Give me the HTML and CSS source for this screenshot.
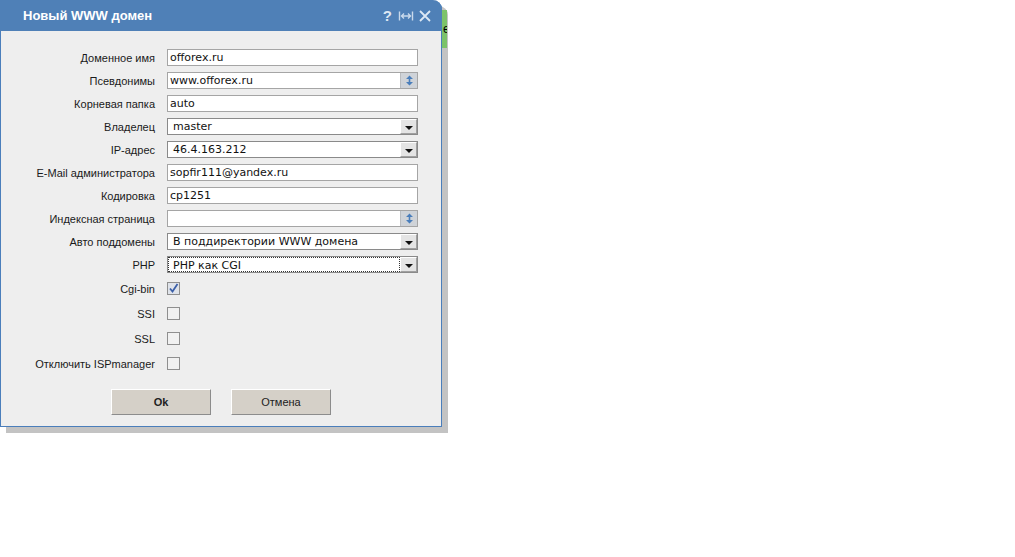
FILE: index.html
```html
<!DOCTYPE html>
<html lang="ru">
<head>
  <meta charset="UTF-8">
  <title>Новый WWW домен</title>
  <link rel="stylesheet" href="styles.css">
</head>
<body>
  <div class="desk">
    <div class="dialog">
      <div class="titlebar">
        <span class="title">Новый WWW домен</span>
        <div class="tools">
          <span class="tool">?</span>
          <svg class="tool-icon" width="16" height="12" viewBox="0 0 16 12">
            <path d="M1.5 1.5v9M14.5 1.5v9M3.5 6h9M6 3.5L3.5 6 6 8.5M10 3.5l2.5 2.5L10 8.5" fill="none" stroke="#c9d9ec" stroke-width="1.4"/>
          </svg>
          <svg class="tool-icon" width="12" height="12" viewBox="0 0 12 12">
            <path d="M1 1l10 10M11 1L1 11" fill="none" stroke="#dde8f4" stroke-width="1.8"/>
          </svg>
        </div>
      </div>

      <form class="body">
        <div class="row">
          <label>Доменное имя</label>
          <div class="field">offorex.ru</div>
        </div>
        <div class="row">
          <label>Псевдонимы</label>
          <div class="field">www.offorex.ru
            <span class="spin">
              <svg width="9" height="11" viewBox="0 0 9 11"><path d="M4.5 0.5L8 4H1zM4.5 10.5L1 7h7z" fill="#4a7ebb"/><rect x="3.7" y="3" width="1.6" height="5" fill="#4a7ebb"/></svg>
            </span>
          </div>
        </div>
        <div class="row">
          <label>Корневая папка</label>
          <div class="field">auto</div>
        </div>
        <div class="row">
          <label>Владелец</label>
          <div class="field select">master<span class="arrow"><i></i></span></div>
        </div>
        <div class="row">
          <label>IP-адрес</label>
          <div class="field select">46.4.163.212<span class="arrow"><i></i></span></div>
        </div>
        <div class="row">
          <label>E-Mail администратора</label>
          <div class="field">sopfir111@yandex.ru</div>
        </div>
        <div class="row">
          <label>Кодировка</label>
          <div class="field">cp1251</div>
        </div>
        <div class="row">
          <label>Индексная страница</label>
          <div class="field">
            <span class="spin">
              <svg width="9" height="11" viewBox="0 0 9 11"><path d="M4.5 0.5L8 4H1zM4.5 10.5L1 7h7z" fill="#4a7ebb"/><rect x="3.7" y="3" width="1.6" height="5" fill="#4a7ebb"/></svg>
            </span>
          </div>
        </div>
        <div class="row">
          <label>Авто поддомены</label>
          <div class="field select">В поддиректории WWW домена<span class="arrow"><i></i></span></div>
        </div>
        <div class="row">
          <label>PHP</label>
          <div class="field select focused"><span class="focus-ring">PHP как CGI</span><span class="arrow"><i></i></span></div>
        </div>

        <div class="row check-row">
          <label>Cgi-bin</label>
          <span class="check checked">
            <svg width="11" height="11" viewBox="0 0 11 11"><path d="M2 5.5l2.5 3L9.5 1" fill="none" stroke="#3b5fa8" stroke-width="1.8"/></svg>
          </span>
        </div>
        <div class="row check-row">
          <label>SSI</label>
          <span class="check"></span>
        </div>
        <div class="row check-row">
          <label>SSL</label>
          <span class="check"></span>
        </div>
        <div class="row check-row">
          <label>Отключить ISPmanager</label>
          <span class="check"></span>
        </div>

        <div class="buttons">
          <button type="button" class="btn ok">Ok</button>
          <button type="button" class="btn">Отмена</button>
        </div>
      </form>
    </div>

    <!-- edge of the window lying behind the dialog -->
    <div class="behind"><span>e</span></div>
  </div>
</body>
</html>
```

FILE: styles.css
```css
/* Reset and base */
* {
  box-sizing: border-box;
  margin: 0;
  padding: 0;
}

body {
  background: #ffffff;
  font-family: 'Liberation Sans', Arial, sans-serif;
  font-size: 11px;
  color: #1a1a1a;
}

.desk {
  position: relative;
  width: 1015px;
  height: 557px;
}

.behind {
  position: absolute;
  left: 442px;
  top: 10px;
  width: 5px;
  height: 38px;
  background: #7cc36a;
  overflow: hidden;
}

.behind span {
  position: absolute;
  left: 1px;
  top: 12px;
  font-size: 12px;
  color: #000;
}

.dialog {
  position: absolute;
  left: 0;
  top: 0;
  width: 442px;
  height: 427px;
  background: #eeeeee;
  border: 1px solid #4a7ebb;
  border-top: none;
  border-top-right-radius: 9px;
  box-shadow: 6px 6px 0 #c3c3c3;
}

.titlebar {
  height: 31px;
  background: #4f80b7;
  border-top-right-radius: 9px;
  margin: 0 -1px;
  display: flex;
  align-items: center;
  justify-content: space-between;
  padding: 0 11px 0 23px;
}

.title {
  color: #ffffff;
  font-weight: 700;
  font-size: 13px;
}

.tools {
  display: flex;
  align-items: center;
  gap: 5px;
}

.tool {
  color: #dde8f4;
  font-weight: 700;
  font-size: 15px;
  margin-right: 1px;
}

.body {
  padding: 15px 0 0 0;
}

.row {
  display: flex;
  align-items: center;
  height: 23px;
}

.row label {
  width: 154px;
  text-align: right;
  margin-right: 12px;
  white-space: nowrap;
}

.field {
  position: relative;
  width: 251px;
  height: 17px;
  background: #ffffff;
  border: 1px solid #a5a5a5;
  font-family: 'DejaVu Sans', Verdana, sans-serif;
  font-size: 11px;
  line-height: 16px;
  padding-left: 2px;
  color: #111;
}

.field.select {
  padding-left: 5px;
  border-color: #8a8a8a;
}

.spin {
  position: absolute;
  right: 0;
  top: 0;
  width: 17px;
  height: 15px;
  background: #cfd3d8;
  border-left: 1px solid #b9bcc0;
  display: flex;
  align-items: center;
  justify-content: center;
}

.arrow {
  position: absolute;
  right: 0;
  top: 0;
  width: 17px;
  height: 15px;
  background: #e4e4e4;
  border: 1px solid #a0a0a0;
  border-top-color: #ffffff;
  border-left-color: #ffffff;
  display: flex;
  align-items: center;
  justify-content: center;
}

.arrow i {
  display: block;
  margin-top: 3px;
  width: 0;
  height: 0;
  border-left: 4px solid transparent;
  border-right: 4px solid transparent;
  border-top: 4px solid #111;
}

.field.focused {
  padding: 0;
}

.focus-ring {
  display: block;
  width: 232px;
  height: 15px;
  padding-left: 4px;
  line-height: 15px;
  border: 1px dotted #333;
}

.check-row {
  height: 25px;
}

.check-row:first-of-type {
  margin-top: 1px;
}

.check {
  width: 13px;
  height: 13px;
  border: 1px solid #8f8f8f;
  background: #f1f1f1;
  display: flex;
  align-items: center;
  justify-content: center;
}

.check.checked {
  background: #dfe3ea;
}

.buttons {
  display: flex;
  justify-content: center;
  gap: 20px;
  margin-top: 13px;
}

.btn {
  width: 100px;
  height: 26px;
  background: #d5d0c8;
  border: 1px solid #8c8c8c;
  border-top-color: #ffffff;
  border-left-color: #ffffff;
  font-family: 'Liberation Sans', Arial, sans-serif;
  font-size: 11px;
  color: #222;
}

.btn.ok {
  font-weight: 700;
}
```
